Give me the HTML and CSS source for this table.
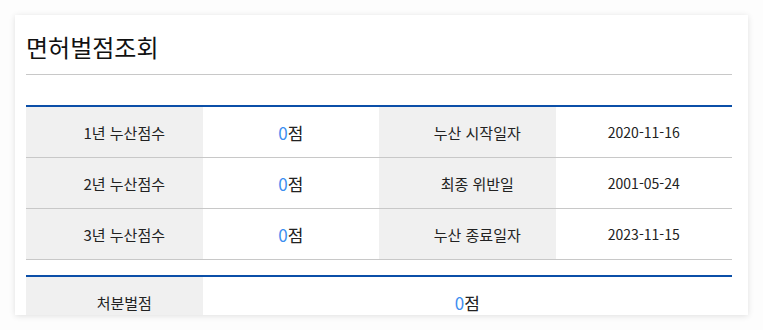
FILE: index.html
```html
<!DOCTYPE html>
<html lang="ko">
<head>
<meta charset="utf-8">
<title>면허벌점조회</title>
<link rel="stylesheet" href="styles.css">
</head>
<body>
<div class="card">
  <h1 class="title">면허벌점조회</h1>
  <table class="info">
    <tr>
      <th>1년 누산점수</th>
      <td class="score"><span class="num">0</span>점</td>
      <th>누산 시작일자</th>
      <td>2020-11-16</td>
    </tr>
    <tr>
      <th>2년 누산점수</th>
      <td class="score"><span class="num">0</span>점</td>
      <th>최종 위반일</th>
      <td>2001-05-24</td>
    </tr>
    <tr>
      <th>3년 누산점수</th>
      <td class="score"><span class="num">0</span>점</td>
      <th>누산 종료일자</th>
      <td>2023-11-15</td>
    </tr>
  </table>
  <table class="info second">
    <tr>
      <th>처분벌점</th>
      <td class="score" colspan="3"><span class="num">0</span>점</td>
    </tr>
  </table>
</div>
</body>
</html>
```
FILE: styles.css
```css
html, body {
  margin: 0;
  padding: 0;
  background: #fdfdfd;
}
body {
  padding: 15px;
  font-family: "Noto Sans CJK KR", "Noto Sans", sans-serif;
  color: #222;
}
.card {
  height: 300px;
  overflow: hidden;
  background: #fff;
  box-shadow: 0 1px 6px rgba(0, 0, 0, 0.12);
  padding: 0 16px 0 11px;
}
.title {
  margin: 0;
  padding: 14px 0 10px;
  font-size: 24px;
  font-weight: 400;
  line-height: 35px;
  color: #111;
  border-bottom: 1px solid #c8c8c8;
  margin-bottom: 30px;
}
.info {
  width: 100%;
  border-collapse: collapse;
  table-layout: fixed;
  border-top: 2px solid #0b4fa8;
}
.info th,
.info td {
  height: 50px;
  padding: 0;
  text-align: center;
  font-size: 14px;
  font-weight: 400;
  border-bottom: 1px solid #c8c8c8;
  color: #222;
}
.info th {
  background: #f0f0f0;
  font-size: 15px;
  padding-left: 20px;
}
.info .score {
  font-size: 17px;
}
.num {
  color: #3d8ef0;
}
.second {
  margin-top: 15px;
}
```
